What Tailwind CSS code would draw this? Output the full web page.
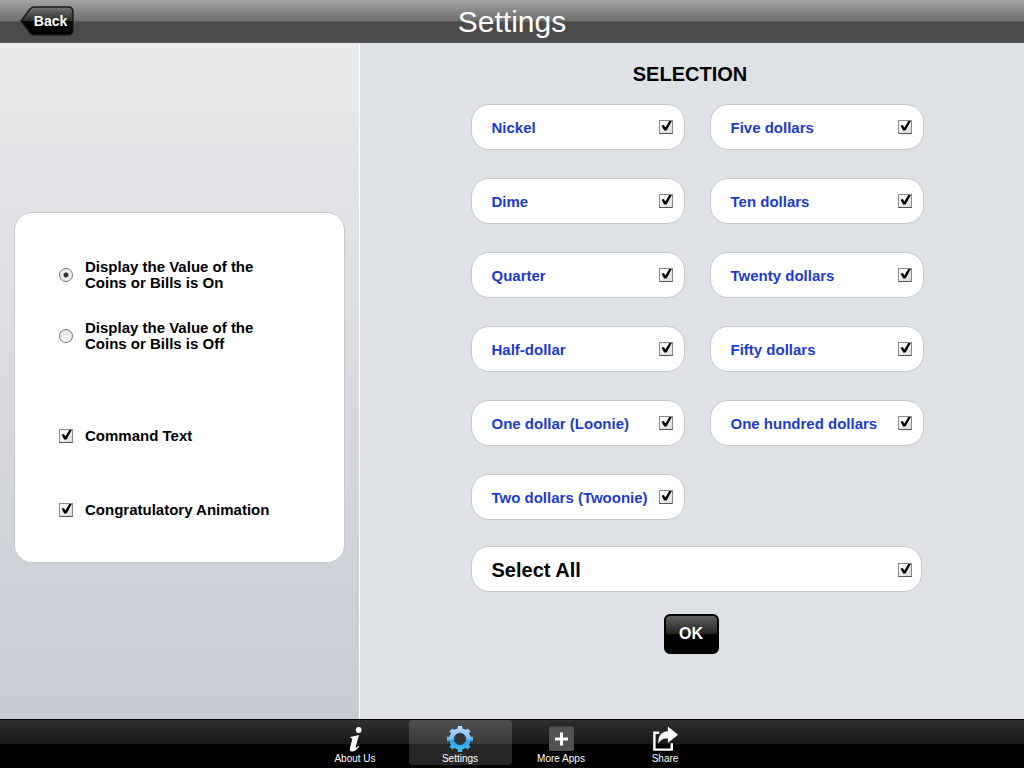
<!DOCTYPE html>
<html lang="en">
<head>
  <meta charset="UTF-8" />
  <meta name="viewport" content="width=device-width, initial-scale=1.0" />
  <title>Settings</title>
  <script src="https://cdn.jsdelivr.net/npm/@tailwindcss/browser@4"></script>
</head>
<body class="min-h-screen flex flex-col bg-[#dee1e6] font-['Liberation_Sans',Arial,sans-serif] text-black">

  <!-- Top bar -->
  <header class="h-[43px] shrink-0 grid grid-cols-[1fr_auto_1fr] items-center bg-linear-to-b from-[#a3a3a3] from-0% via-[#6e6e6e] via-50% to-[#4b4b4b] to-52% border-b border-[#5c5c5c]">
    <button type="button" class="ml-5 w-[54px] h-[30px] grid justify-self-start items-center text-white text-sm leading-5 font-bold">
      <svg class="col-start-1 row-start-1" width="54" height="30" viewBox="0 0 54 30" aria-hidden="true">
        <defs>
          <linearGradient id="back-fill" x1="0" y1="0" x2="0" y2="1">
            <stop offset="0" stop-color="#747474" />
            <stop offset=".5" stop-color="#2c2c2c" />
            <stop offset=".52" stop-color="#000" />
            <stop offset="1" stop-color="#000" />
          </linearGradient>
        </defs>
        <path d="M1 15 10 3Q12 1 14 1H48Q53 1 53 6V24Q53 29 48 29H14Q12 29 10 27Z" fill="url(#back-fill)" stroke="#1c1c1c" stroke-width="1.5" />
      </svg>
      <span class="col-start-1 row-start-1 pl-[7px]">Back</span>
    </button>
    <h1 class="pt-px text-white text-[30px] leading-10">Settings</h1>
  </header>

  <main class="grow flex">
    <!-- Display options -->
    <aside class="w-[360px] shrink-0 px-[14px] pt-3 flex items-center border-r border-white bg-linear-to-b from-[#e9eaeb] via-[#dcdee2] via-40% to-[#c7cbd4]">
      <form class="w-full h-[351px] pl-11 pt-[46px] bg-white border border-[#c6c8cc] rounded-[18px] text-[15px] leading-4 font-bold">
        <label class="flex items-center gap-3">
          <input type="radio" name="value" checked class="appearance-none size-[14px] rounded-full border border-[#777] bg-linear-to-b from-[#e2e2e2] to-[#f8f8f8] checked:bg-[radial-gradient(circle,#333_0_2px,#eee_3px)]" />
          <span>Display the Value of the<br>Coins or Bills is On</span>
        </label>
        <label class="mt-[29px] flex items-center gap-3">
          <input type="radio" name="value" class="appearance-none size-[14px] rounded-full border border-[#777] bg-linear-to-b from-[#e2e2e2] to-[#f8f8f8] checked:bg-[radial-gradient(circle,#333_0_2px,#eee_3px)]" />
          <span>Display the Value of the<br>Coins or Bills is Off</span>
        </label>
        <label class="mt-[76px] flex items-center gap-3">
          <span class="grid">
            <input type="checkbox" checked class="peer col-start-1 row-start-1 appearance-none size-[14px] border border-[#8a8a8a] border-b-[#555] bg-linear-to-br from-white to-[#dcdcdc]" />
            <svg class="col-start-1 row-start-1 size-[14px] pointer-events-none invisible peer-checked:visible" viewBox="0 0 14 14" aria-hidden="true"><path d="M2.500 5.800 4.800 5 6.400 7.600 10.300 1H12.800L7.600 10.500H5.200Z" /></svg>
          </span>
          Command Text
        </label>
        <label class="mt-[58px] flex items-center gap-3">
          <span class="grid">
            <input type="checkbox" checked class="peer col-start-1 row-start-1 appearance-none size-[14px] border border-[#8a8a8a] border-b-[#555] bg-linear-to-br from-white to-[#dcdcdc]" />
            <svg class="col-start-1 row-start-1 size-[14px] pointer-events-none invisible peer-checked:visible" viewBox="0 0 14 14" aria-hidden="true"><path d="M2.500 5.800 4.800 5 6.400 7.600 10.300 1H12.800L7.600 10.500H5.200Z" /></svg>
          </span>
          Congratulatory Animation
        </label>
      </form>
    </aside>

    <!-- Coins and bills -->
    <section class="grow flex flex-col items-center pt-[17px] pb-16">
      <h2 class="text-xl leading-7 font-bold pr-1">SELECTION</h2>
      <div class="mt-4 pl-[10px]">
        <div id="money" class="grid grid-cols-[214px_214px] grid-flow-col grid-rows-6 gap-x-[25px] gap-y-7 text-[15px] text-[#1a3ccf] font-bold"></div>
        <label class="mt-[26px] mr-[2px] h-[46px] pt-px pl-5 pr-[9px] flex items-center justify-between bg-white border border-[#c6c8cc] rounded-[18px] text-xl font-bold">
          Select All
          <span class="grid">
            <input type="checkbox" id="all" checked class="peer col-start-1 row-start-1 appearance-none size-[14px] border border-[#8a8a8a] border-b-[#555] bg-linear-to-br from-white to-[#dcdcdc]" />
            <svg class="col-start-1 row-start-1 size-[14px] pointer-events-none invisible peer-checked:visible" viewBox="0 0 14 14" aria-hidden="true"><path d="M2.500 5.800 4.800 5 6.400 7.600 10.300 1H12.800L7.600 10.500H5.200Z" /></svg>
          </span>
        </label>
      </div>
      <button type="button" class="mt-[22px] mr-[2px] w-[55px] h-10 rounded-md border-2 border-black bg-linear-to-b from-[#606060] via-[#242424] via-50% to-black to-52% text-white text-base font-bold">OK</button>
    </section>
  </main>

  <!-- Tab bar -->
  <nav class="h-[49px] shrink-0 flex justify-center border-t border-black bg-linear-to-b from-[#303030] via-[#181818] via-50% to-black to-52% text-white text-[10px] leading-3">
    <a href="#" class="w-[103px] h-[45px] flex flex-col items-center pt-[5px] pr-[5px]">
      <svg width="28" height="28" viewBox="0 0 28 28" fill="#fff" aria-hidden="true">
        <circle cx="17.700" cy="5" r="2.900" />
        <path d="M9.500 12Q14 11 18 10L14.800 21.500Q14.500 23.500 16 22.300L17.500 20.800 18.300 21.500Q14.500 26.500 11 26.500 8 26.300 9 22.500L11.300 14.500Q11.700 13 9.500 13Z" />
      </svg>
      About Us
    </a>
    <a href="#" class="w-[103px] h-[45px] flex flex-col items-center pt-[5px] pr-px rounded-sm bg-white/15">
      <svg width="28" height="28" viewBox="-14 -14 28 28" aria-hidden="true">
        <defs>
          <linearGradient id="gear-fill" gradientUnits="userSpaceOnUse" x1="0" y1="-13" x2="0" y2="13">
            <stop offset="0" stop-color="#c0defa" />
            <stop offset=".5" stop-color="#78bcf0" />
            <stop offset=".55" stop-color="#2fa2e8" />
            <stop offset="1" stop-color="#45bcf8" />
          </linearGradient>
        </defs>
        <g stroke="url(#gear-fill)" stroke-width="4.500" fill="none">
          <path d="M.01-13 0 13M-13 .01 13 0M-9-9 9 9M9-9-9 9" stroke-linejoin="round" />
          <circle r="8.200" stroke-width="5" />
        </g>
        <circle r="5.800" fill="#333" stroke="#1d4f80" stroke-width="1" />
      </svg>
      Settings
    </a>
    <a href="#" class="w-[103px] h-[45px] flex flex-col items-center pt-[5px] pr-[5px]">
      <svg width="28" height="28" viewBox="0 0 28 28" aria-hidden="true">
        <rect x="2" y="1.500" width="25" height="24.500" rx="2" fill="#525252" />
        <path d="M14.500 7.500V20.500M8 14H21" stroke="#fff" stroke-width="3" />
      </svg>
      More Apps
    </a>
    <a href="#" class="w-[103px] h-[45px] flex flex-col items-center pt-[6px] pr-[3px]">
      <svg width="28" height="28" viewBox="0 0 28 28" fill="none" aria-hidden="true">
        <path d="M8 7H3V24.500H21V18" stroke="#fff" stroke-width="2.500" />
        <path d="M17 .5 27.500 9 17 17.500V13Q10.500 12 7 18.500 6.500 6 17 5.500Z" fill="#fff" />
      </svg>
      Share
    </a>
  </nav>

  <!-- one row of the coins and bills grid -->
  <template id="row">
    <label class="h-[46px] pl-5 pr-[11px] flex items-center justify-between bg-white border border-[#c6c8cc] rounded-[18px] whitespace-nowrap">
      <span class="pt-[2px]"></span>
      <span class="grid">
        <input type="checkbox" checked class="peer col-start-1 row-start-1 appearance-none size-[14px] border border-[#8a8a8a] border-b-[#555] bg-linear-to-br from-white to-[#dcdcdc]" />
        <svg class="col-start-1 row-start-1 size-[14px] pointer-events-none invisible peer-checked:visible" viewBox="0 0 14 14" aria-hidden="true"><path d="M2.500 5.800 4.800 5 6.400 7.600 10.300 1H12.800L7.600 10.500H5.200Z" /></svg>
      </span>
    </label>
  </template>

  <script>
    const names = [
      "Nickel", "Dime", "Quarter", "Half-dollar", "One dollar (Loonie)", "Two dollars (Twoonie)",
      "Five dollars", "Ten dollars", "Twenty dollars", "Fifty dollars", "One hundred dollars",
    ];
    const money = document.getElementById("money");
    const all = document.getElementById("all");

    names.forEach((name) => {
      const row = document.getElementById("row").content.cloneNode(true);
      row.querySelector("span").textContent = name;
      money.appendChild(row);
    });

    const boxes = [...money.querySelectorAll("input")];
    all.addEventListener("change", () => boxes.forEach((b) => (b.checked = all.checked)));
    money.addEventListener("change", () => (all.checked = boxes.every((b) => b.checked)));
  </script>
</body>
</html>
